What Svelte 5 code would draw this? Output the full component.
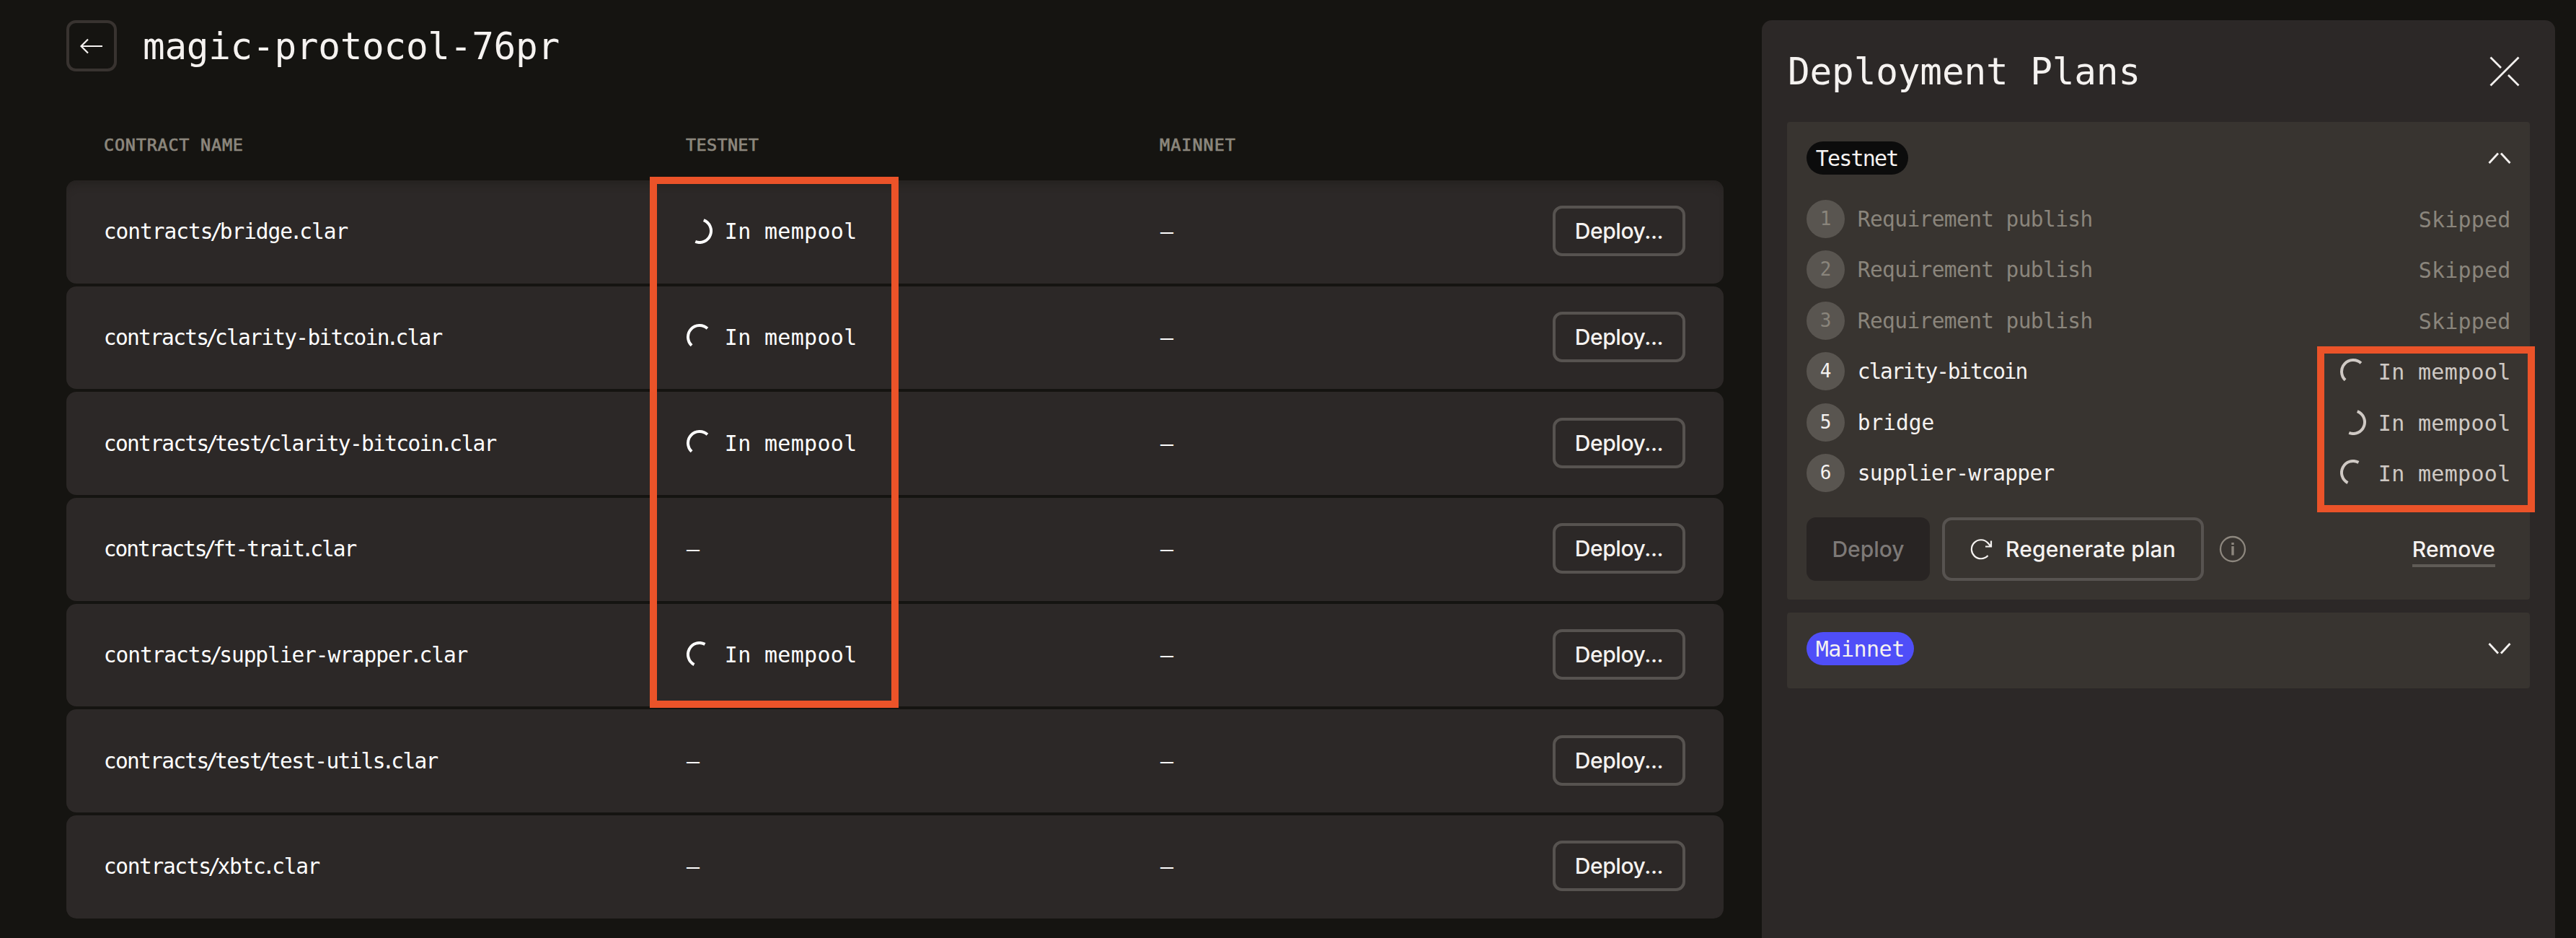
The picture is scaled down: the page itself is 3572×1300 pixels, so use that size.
<script>
  const MONO_ADVANCE = 0.602;

  const contracts = [
    { name: 'contracts/bridge.clar', width: 337, spin: -69 },
    { name: 'contracts/clarity-bitcoin.clar', width: 468, spin: 133 },
    { name: 'contracts/test/clarity-bitcoin.clar', width: 543, spin: 133 },
    { name: 'contracts/ft-trait.clar', width: 349, spin: null },
    { name: 'contracts/supplier-wrapper.clar', width: 503, spin: 118 },
    { name: 'contracts/test/test-utils.clar', width: 462, spin: null },
    { name: 'contracts/xbtc.clar', width: 298, spin: null }
  ];

  const steps = [
    { label: 'Requirement publish', width: 324, skipped: true },
    { label: 'Requirement publish', width: 324, skipped: true },
    { label: 'Requirement publish', width: 324, skipped: true },
    { label: 'clarity-bitcoin', width: 234, spin: 133 },
    { label: 'bridge', width: 104, spin: -69 },
    { label: 'supplier-wrapper', width: 271, spin: 118 }
  ];

  // Spreads the characters so that a label fills its measure; dots and slashes are set tight.
  function tracking(text, width, size) {
    const narrow = (text.match(/[./]/g) || []).length;
    const natural = text.length * MONO_ADVANCE * size - narrow * size * 0.22;
    return (width + size * 0.08 - natural) / (text.length - 1);
  }
</script>

{#snippet mono(text, width, size)}
  <span class="mono" style="width:{width}px;font-size:{size}px;letter-spacing:{tracking(text, width, size)}px">{#each text.split(/([./])/) as part}{#if part === '.' || part === '/'}<span class="tight">{part}</span>{:else}{part}{/if}{/each}</span>
{/snippet}

{#snippet spinner(angle)}
  <svg class="spinner" width="36" height="36" viewBox="-18 -18 36 36" fill="none">
    <path d="M16 0A16 16 0 0 1 -16 0" stroke="currentColor" stroke-width="4" transform="rotate({angle})" />
  </svg>
{/snippet}

<div class="page">
  <main>
    <header class="top">
      <button class="back" aria-label="Back">
        <svg width="32" height="22" viewBox="0 0 32 22" fill="none" stroke="#f5f2f0" stroke-width="2.2">
          <path d="M31 11H1.5M11 1.5L1.500 11L11 20.500" />
        </svg>
      </button>
      <h1>{@render mono('magic-protocol-76pr', 574, 51)}</h1>
    </header>

    <div class="columns">
      <span>{@render mono('CONTRACT NAME', 191, 23.5)}</span>
      <span>{@render mono('TESTNET', 99, 23.5)}</span>
      <span>{@render mono('MAINNET', 103, 23.5)}</span>
    </div>

    <div class="rows">
      {#each contracts as c}
        <div class="row">
          <span>{@render mono(c.name, c.width, 29.5)}</span>
          <span class="status">
            {#if c.spin !== null}
              {@render spinner(c.spin)}
              {@render mono('In mempool', 181, 30)}
            {:else}
              <span class="dash">–</span>
            {/if}
          </span>
          <span class="dash">–</span>
          <button class="deploy">Deploy...</button>
        </div>
      {/each}
    </div>
    <div class="mark mark-table"></div>
  </main>

  <aside>
    <div class="panel-head">
      <h2>{@render mono('Deployment Plans', 485, 51)}</h2>
      <svg width="42" height="42" viewBox="0 0 42 42" stroke="#f5f2f0" stroke-width="2.8" fill="none">
        <path d="M1.500 40.500L40.500 1.500M1.500 1.500L16 16M26 26L40.500 40.500" />
      </svg>
    </div>

    <section class="card testnet">
      <div class="card-head">
        <span class="badge black">{@render mono('Testnet', 113, 30)}</span>
        <svg width="32" height="18" viewBox="0 0 32 18" stroke="#f5f2f0" stroke-width="2.8" fill="none">
          <path d="M1.500 16L14 2.500M18 2.500L30.500 16" />
        </svg>
      </div>
      <ol>
        {#each steps as s, i}
          <li class:skipped={s.skipped}>
            <span class="num">{i + 1}</span>
            <span class="label">{@render mono(s.label, s.width, 29.5)}</span>
            {#if s.skipped}
              <span class="state">{@render mono('Skipped', 125, 30)}</span>
            {:else}
              <span class="state">{@render spinner(s.spin)}{@render mono('In mempool', 181, 30)}</span>
            {/if}
          </li>
        {/each}
      </ol>
      <div class="actions">
        <button class="solid" disabled>Deploy</button>
        <button class="outline">
          <svg width="32" height="30" viewBox="0 0 32 30" fill="none" stroke="#f5f2f0" stroke-width="2.2">
            <path d="M24.500 24A13 13 0 1 1 24.500 6.500L28 10.500M29 3.500V11.500H21" />
          </svg>
          Regenerate plan
        </button>
        <svg class="info" width="38" height="38" viewBox="0 0 38 38" fill="none" stroke="#8d877e" stroke-width="2.3">
          <circle cx="19" cy="19" r="17" />
          <path d="M19 15V27.500M19 10V13" stroke-width="3.4" />
        </svg>
        <a class="remove" href="#remove">Remove</a>
      </div>
      <div class="mark mark-plan"></div>
    </section>

    <section class="card">
      <div class="card-head">
        <span class="badge blue">{@render mono('Mainnet', 121, 30)}</span>
        <svg width="32" height="18" viewBox="0 0 32 18" stroke="#f5f2f0" stroke-width="2.8" fill="none">
          <path d="M1.500 2L14 15.500M18 15.500L30.500 2" />
        </svg>
      </div>
    </section>
  </aside>
</div>

<style>
  :global(body) {
    margin: 0;
    background: #151411;
  }
  * {
    box-sizing: border-box;
  }
  .page {
    display: flex;
    width: 3572px;
    height: 1300px;
    padding: 28px 29px 0 92px;
    gap: 53px;
    overflow: hidden;
    background: #151411;
    color: #f5f2f0;
    font-family: Inter, sans-serif;
  }
  main {
    position: relative;
    width: 2298px;
    flex: none;
  }
  h1, h2 {
    margin: 0;
    font-weight: 400;
    line-height: 60px;
  }
  .mono {
    display: block;
    padding-top: 2px;
    font-family: 'DejaVu Sans Mono', monospace;
    white-space: pre;
    text-indent: -0.04em;
  }
  .tight {
    margin: 0 -0.11em;
  }
  .top {
    display: flex;
    align-items: center;
    height: 71px;
    gap: 38px;
  }
  button {
    padding: 0;
    background: none;
    border: 4px solid #575350;
    border-radius: 13px;
    color: #f5f2f0;
    font: 500 30px/40px Inter, sans-serif;
    display: flex;
    align-items: center;
    justify-content: center;
  }
  .back {
    width: 70px;
    height: 71px;
    border-color: #383330;
  }
  .columns, .row {
    display: grid;
    grid-template-columns: 807px 657px 544px 184px;
    align-items: center;
    padding: 0 53px;
  }
  .columns {
    margin-top: 85px;
    height: 31px;
    color: #8c877d;
    line-height: 31px;
    -webkit-text-stroke: 0.7px #8c877d;
  }
  .rows {
    display: grid;
    gap: 4px;
    margin-top: 35px;
  }
  .row {
    height: 142.67px;
    border-radius: 14px;
    background: #2c2827;
    color: #ffffff;
    line-height: 40px;
    padding-bottom: 2px;
  }
  .row:first-child {
    box-shadow: inset 0 12px 12px -8px #24211f;
  }
  .status, .state {
    display: flex;
    align-items: center;
    gap: 18px;
  }
  .spinner {
    flex: none;
  }
  .dash {
    padding-top: 2px;
    font: 30px/40px 'DejaVu Sans Mono', monospace;
  }
  .deploy {
    width: 184px;
    height: 70px;
    letter-spacing: -0.4px;
  }
  aside {
    width: 1100px;
    height: 1300px;
    padding: 0 35px;
    border-radius: 14px 14px 0 0;
    background: #2c2827;
  }
  .panel-head {
    display: flex;
    align-items: center;
    justify-content: space-between;
    height: 141px;
    padding: 0 14px 0 3px;
  }
  .card {
    position: relative;
    height: 105px;
    padding: 27px 26px 0 27px;
    border-radius: 4px;
    background: #383430;
  }
  .testnet {
    height: 662px;
    margin-bottom: 18px;
  }
  .card-head {
    display: flex;
    align-items: center;
    justify-content: space-between;
    height: 46px;
  }
  .badge {
    padding: 0 14px;
    border-radius: 23px;
    line-height: 44px;
  }
  .black {
    background: #0c0c0c;
  }
  .blue {
    background: #4f4ef8;
  }
  ol {
    display: grid;
    gap: 17.4px;
    margin: 35px 0 0;
    padding: 0;
    list-style: none;
  }
  li {
    display: flex;
    align-items: center;
    height: 53px;
    line-height: 53px;
    gap: 19px;
  }
  .num {
    width: 53px;
    border-radius: 50%;
    background: #595550;
    text-align: center;
    font: 26px/53px 'DejaVu Sans Mono', monospace;
  }
  .state {
    margin-left: auto;
    margin-right: 2px;
    color: #cfc9c4;
  }
  .skipped, .skipped .state {
    color: #8a857c;
  }
  .actions {
    display: flex;
    align-items: center;
    margin-top: 35px;
    height: 88px;
  }
  .solid {
    width: 171px;
    height: 88px;
    border: 0;
    background: #282423;
    color: #7d7977;
  }
  .outline {
    width: 363px;
    height: 88px;
    margin: 0 21px 0 17px;
    gap: 17px;
    letter-spacing: 0.15px;
  }
  .remove {
    margin-left: auto;
    margin-right: 22px;
    margin-top: 5px;
    padding-bottom: 1px;
    border-bottom: 4px solid #5f5b56;
    color: #f5f2f0;
    font: 500 30px/40px Inter, sans-serif;
    text-decoration: none;
  }
  .mark {
    position: absolute;
    border: 10px solid #eb5329;
  }
  .mark-table {
    left: 809px;
    top: 217px;
    width: 345px;
    height: 736px;
  }
  .mark-plan {
    left: 735px;
    top: 311px;
    width: 302px;
    height: 230px;
  }
</style>
